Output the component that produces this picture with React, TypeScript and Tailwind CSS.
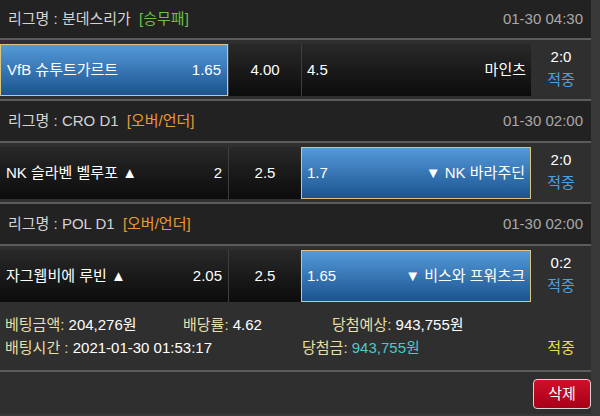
import React from "react";

type Game = {
  league: string;
  type: string;
  typeColor: string;
  time: string;
  home: string;
  homeOdd: string;
  mid: string;
  away: string;
  awayOdd: string;
  pick: "home" | "away";
  score: string;
};

const games: Game[] = [
  {
    league: "분데스리가",
    type: "[승무패]",
    typeColor: "text-[#6cc04a]",
    time: "01-30 04:30",
    home: "VfB 슈투트가르트",
    homeOdd: "1.65",
    mid: "4.00",
    away: "마인츠",
    awayOdd: "4.5",
    pick: "home",
    score: "2:0",
  },
  {
    league: "CRO D1",
    type: "[오버/언더]",
    typeColor: "text-[#e89b35]",
    time: "01-30 02:00",
    home: "NK 슬라벤 벨루포 ▲",
    homeOdd: "2",
    mid: "2.5",
    away: "▼ NK 바라주딘",
    awayOdd: "1.7",
    pick: "away",
    score: "2:0",
  },
  {
    league: "POL D1",
    type: "[오버/언더]",
    typeColor: "text-[#e89b35]",
    time: "01-30 02:00",
    home: "자그웹비에 루빈 ▲",
    homeOdd: "2.05",
    mid: "2.5",
    away: "▼ 비스와 프워츠크",
    awayOdd: "1.65",
    pick: "away",
    score: "0:2",
  },
];

const dark = "bg-gradient-to-b from-[#292929] to-[#0c0c0c]";
const blue =
  "bg-gradient-to-b from-[#559ad9] to-[#1a5490] border-[1.5px] border-[#d9c67c]";

const GameBlock = ({ g, first }: { g: Game; first: boolean }) => {
  return (
    <div className={first ? "" : "border-t-2 border-[#5c5c5c]"}>
      <div
        className={`flex items-center justify-between bg-[#222222] px-2 ${
          first ? "h-[40px]" : "h-[42px]"
        } border-b-2 border-[#5c5c5c]`}
      >
        <div className="text-[15px] text-[#d4d4d4]">
          리그명 : {g.league}{" "}
          <span className={`ml-1 ${g.typeColor}`}>{g.type}</span>
        </div>
        <div className="text-[15px] text-[#a9a9a9]">{g.time}</div>
      </div>

      <div className="flex pb-[3px] pt-1">
        <div
          className={`flex h-[52px] w-[228px] items-center justify-between pl-[6px] pr-[6px] text-[15px] text-white ${
            g.pick === "home" ? blue : dark
          }`}
        >
          <span>{g.home}</span>
          <span>{g.homeOdd}</span>
        </div>
        <div
          className={`flex h-[52px] w-[73px] items-center justify-center border-l border-[#3e3e3e] text-[15px] text-white ${dark}`}
        >
          {g.mid}
        </div>
        <div
          className={`flex h-[52px] w-[230px] items-center justify-between pl-[5px] pr-[5px] text-[15px] text-white ${
            g.pick === "away" ? blue : `border-l border-[#3e3e3e] ${dark}`
          }`}
        >
          <span>{g.awayOdd}</span>
          <span>{g.away}</span>
        </div>
        <div className="flex w-[60px] flex-col items-center justify-center pb-1 text-[15px] leading-[23px]">
          <span className="text-white">{g.score}</span>
          <span className="text-[#4ea0e0]">적중</span>
        </div>
      </div>
    </div>
  );
};

export default function App() {
  return (
    <div
      className="min-h-[416px] bg-[#393939]"
      style={{
        fontFamily:
          '"Liberation Sans", "Noto Sans CJK KR", "DejaVu Sans", sans-serif',
      }}
    >
      <div className="w-[591px] bg-[#2f2f2f]">
        {games.map((g, i) => (
          <GameBlock key={i} g={g} first={i === 0} />
        ))}

        <div className="border-b-2 border-[#5c5c5c] pb-[11px] pl-[5px] pt-[8px] text-[15px] leading-[23px]">
          <div className="flex">
            <span className="w-[178px]">
              <span className="text-[#e6dfa6]">베팅금액: </span>
              <span className="text-white">204,276원</span>
            </span>
            <span className="w-[149px]">
              <span className="text-[#e6dfa6]">배당률: </span>
              <span className="text-white">4.62</span>
            </span>
            <span>
              <span className="text-[#e6dfa6]">당첨예상: </span>
              <span className="text-white">943,755원</span>
            </span>
          </div>
          <div className="flex">
            <span className="w-[297px]">
              <span className="text-[#e6dfa6]">배팅시간 : </span>
              <span className="text-white">2021-01-30 01:53:17</span>
            </span>
            <span className="flex-1">
              <span className="text-[#e6dfa6]">당첨금: </span>
              <span className="text-[#4cc8c8]">943,755원</span>
            </span>
            <span className="w-[60px] text-center text-[#e3df4c]">적중</span>
          </div>
        </div>

        <div className="flex justify-end pb-[5px] pt-[7px]">
          <button className="h-[30px] w-[58px] rounded-[4px] border border-[#d6d6d6] bg-gradient-to-b from-[#d0102a] to-[#a80018] text-[15px] text-white">
            삭제
          </button>
        </div>
      </div>
    </div>
  );
}
